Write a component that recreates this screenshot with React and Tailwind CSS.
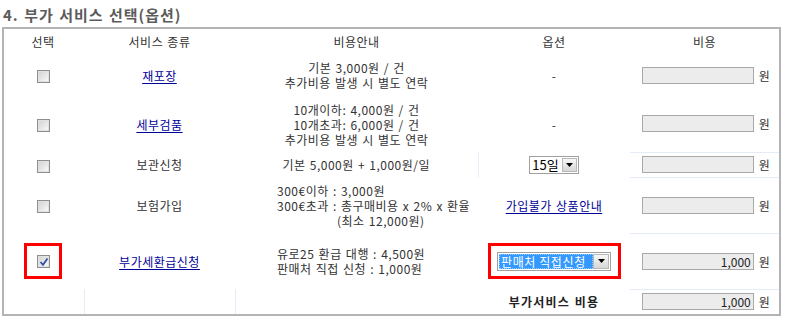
import React from "react";

function Check({ checked }) {
  return (
    <span className="relative inline-block w-[13px] h-[13px] border border-[#8e8e8e] align-middle bg-linear-to-br from-[#d0d0d0] to-[#fbfbfb]">
      <span className="absolute inset-0 border border-[#e2e2e2]" />
      {checked && (
        <svg className="absolute left-[1px] top-[1px]" width="10" height="10" viewBox="0 0 10 10">
          <path d="M1.5 5 L4 7.8 L8.5 1.5" stroke="#3450a8" strokeWidth="1.8" fill="none" />
        </svg>
      )}
    </span>
  );
}

function Arrow() {
  return (
    <svg width="7" height="4" viewBox="0 0 7 4">
      <path d="M0 0 H7 L3.5 4 Z" fill="#000" />
    </svg>
  );
}

function Cost({ value }) {
  return (
    <div className="flex items-center justify-center gap-[5px] pl-[3px]">
      <span className="block w-[112px] h-[17px] border border-[#a8a8a8] bg-[#ececec] text-right pr-[2px] leading-[15px] text-[#222] tracking-normal">
        {value}
      </span>
      <span className="text-[#333]">원</span>
    </div>
  );
}

const link = "text-[#000099] underline underline-offset-2";

export default function App() {
  return (
    <div className="w-[785px] h-[328px] bg-white text-[12px] leading-[15px] tracking-[0.5px] [word-spacing:1px] text-[#333] font-['Noto_Sans_CJK_KR','Noto_Sans',sans-serif]">
      <div className="h-[27px] pt-[5px] pl-[3px] leading-[20px] text-[15px] font-bold tracking-[1px] [word-spacing:1px] text-[#5c5c5c]">
        4. 부가 서비스 선택(옵션)
      </div>
      <div className="ml-[2px] w-[779px] border-2 border-[#b4b4b4]">
        <table className="table-fixed border-collapse w-[775px]">
          <colgroup>
            <col className="w-[80px]" />
            <col className="w-[151px]" />
            <col className="w-[243px]" />
            <col className="w-[152px]" />
            <col className="w-[149px]" />
          </colgroup>
          <tbody>
            <tr className="h-[25px] text-center">
              <td className="p-0 pr-[2px]">선택</td>
              <td className="p-0">서비스 종류</td>
              <td className="p-0">비용안내</td>
              <td className="p-0">옵션</td>
              <td className="p-0">비용</td>
            </tr>
            <tr className="h-[42px] text-center">
              <td className="p-0 pr-[2px]"><Check /></td>
              <td className="p-0"><a className={link}>재포장</a></td>
              <td className="p-0">
                <div>기본 3,000원 / 건</div>
                <div>추가비용 발생 시 별도 연락</div>
              </td>
              <td className="p-0">-</td>
              <td className="p-0"><Cost value="" /></td>
            </tr>
            <tr className="h-[56px] text-center">
              <td className="p-0 pr-[2px]"><Check /></td>
              <td className="p-0"><a className={link}>세부검품</a></td>
              <td className="p-0">
                <div>10개이하: 4,000원 / 건</div>
                <div>10개초과: 6,000원 / 건</div>
                <div>추가비용 발생 시 별도 연락</div>
              </td>
              <td className="p-0">-</td>
              <td className="p-0"><Cost value="" /></td>
            </tr>
            <tr className="h-[25px] text-center">
              <td className="p-0 pr-[2px]"><Check /></td>
              <td className="p-0">보관신청</td>
              <td className="p-0 border-r border-[#e6eef8]">기본 5,000원 + 1,000원/일</td>
              <td className="p-0">
                <span className="inline-flex items-stretch align-middle h-[18px] w-[50px] border border-[#a0a0a0] bg-white p-[1px]">
                  <span className="flex-1 text-left pl-[1px] leading-[14px] text-[13px] tracking-normal text-black">15일</span>
                  <span className="w-[15px] flex items-center justify-center border border-[#b8b8b8] bg-linear-to-b from-[#f8f8f8] to-[#d6d6d6]">
                    <Arrow />
                  </span>
                </span>
              </td>
              <td className="p-0 border-y border-[#e3ecf7]"><Cost value="" /></td>
            </tr>
            <tr className="h-[56px]">
              <td className="p-0 pr-[2px] text-center"><Check /></td>
              <td className="p-0 text-center">보험가입</td>
              <td className="p-0 pl-[42px] text-left whitespace-nowrap">
                <div>300€이하 : 3,000원</div>
                <div>300€초과 : 총구매비용 x 2% x 환율</div>
                <div className="pl-[60px]">(최소 12,000원)</div>
              </td>
              <td className="p-0 text-center"><a className={link}>가입불가 상품안내</a></td>
              <td className="p-0"><Cost value="" /></td>
            </tr>
            <tr className="h-[56px]">
              <td className="p-0 pr-[2px] text-center">
                <span className="inline-flex w-[38px] h-[36px] border-[3px] border-[#ff0000] items-center justify-center align-middle">
                  <Check checked />
                </span>
              </td>
              <td className="p-0 text-center"><a className={link}>부가세환급신청</a></td>
              <td className="p-0 pl-[42px] text-left whitespace-nowrap">
                <div>유로25 환급 대행 : 4,500원</div>
                <div>판매처 직접 신청 : 1,000원</div>
              </td>
              <td className="p-0 text-center">
                <span className="inline-flex w-[133px] h-[36px] border-[3px] border-[#ff0000] items-center justify-center align-middle">
                  <span className="inline-flex items-stretch h-[19px] w-[114px] border border-[#a0a0a0] bg-white p-[1px]">
                    <span className="flex-1 bg-[#3399ff] text-white text-left pl-[2px] leading-[15px] text-[12px] tracking-[0.6px] [word-spacing:0px] whitespace-nowrap overflow-hidden outline-1 outline-dotted outline-[#ffffff80] -outline-offset-1">
                      판매처 직접신청
                    </span>
                    <span className="w-[16px] shrink-0 flex items-center justify-center border border-[#b8b8b8] bg-linear-to-b from-[#f8f8f8] to-[#d6d6d6]">
                      <Arrow />
                    </span>
                  </span>
                </span>
              </td>
              <td className="p-0 border-y border-[#e3ecf7]"><Cost value="1,000" /></td>
            </tr>
            <tr className="h-[25px]">
              <td className="p-0 border-r border-[#e3ecf7]" />
              <td className="p-0 border-r border-[#e3ecf7]" />
              <td className="p-0" />
              <td className="p-0 text-center font-bold tracking-[1.2px] text-[#222]">부가서비스 비용</td>
              <td className="p-0"><Cost value="1,000" /></td>
            </tr>
          </tbody>
        </table>
      </div>
    </div>
  );
}
